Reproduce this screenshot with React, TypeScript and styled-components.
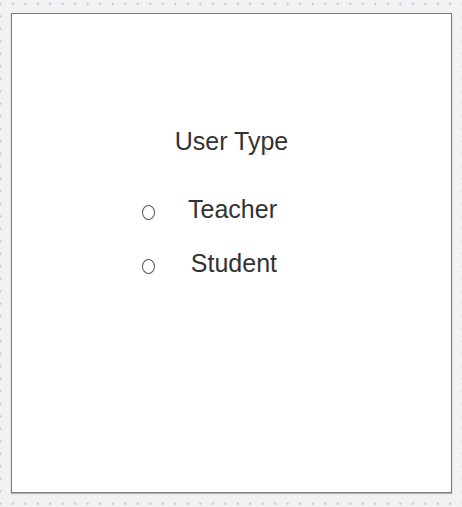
import React from "react";
import styled, { createGlobalStyle } from "styled-components";

const Global = createGlobalStyle`
  html, body {
    margin: 0;
    padding: 0;
  }
  body {
    background-color: #f1f2f4;
    background-image: radial-gradient(circle, #bfc2c8 0.9px, transparent 1.3px);
    background-size: 12.5px 12.5px;
    background-position: -6px -2.5px;
    font-family: "Liberation Sans", Arial, sans-serif;
    min-height: 507px;
  }
`;

const Page = styled.div`
  padding: 13px 10px 14px 11px;
`;

const Card = styled.div`
  box-sizing: border-box;
  height: 480px;
  background: #ffffff;
  border: 1px solid #7a7a7a;
  box-shadow: 0 1px 1px rgba(0, 0, 0, 0.25);
  display: flex;
  flex-direction: column;
  align-items: center;
  padding-top: 113px;
`;

const Heading = styled.div`
  font-size: 25px;
  line-height: 28px;
  color: #333333;
  margin-bottom: 40px;
`;

const Options = styled.div`
  display: flex;
  flex-direction: column;
  gap: 26px;
  width: 135px;
  margin-left: -44px;
`;

const Option = styled.label`
  display: flex;
  align-items: center;
  justify-content: space-between;
  height: 28px;
  cursor: pointer;
`;

const Radio = styled.input.attrs({ type: "radio" })`
  appearance: none;
  -webkit-appearance: none;
  box-sizing: border-box;
  margin: 6px 0 0 0;
  width: 13px;
  height: 15px;
  border: 1px solid #555555;
  border-radius: 50%;
  background: #ffffff;
  flex: none;
`;

const Label = styled.span`
  font-size: 25px;
  line-height: 28px;
  color: #333333;
`;

export default function App() {
  return (
    <>
      <Global />
      <Page>
        <Card>
          <Heading>User Type</Heading>
          <Options>
            <Option>
              <Radio name="userType" value="teacher" />
              <Label>Teacher</Label>
            </Option>
            <Option>
              <Radio name="userType" value="student" />
              <Label>Student</Label>
            </Option>
          </Options>
        </Card>
      </Page>
    </>
  );
}
